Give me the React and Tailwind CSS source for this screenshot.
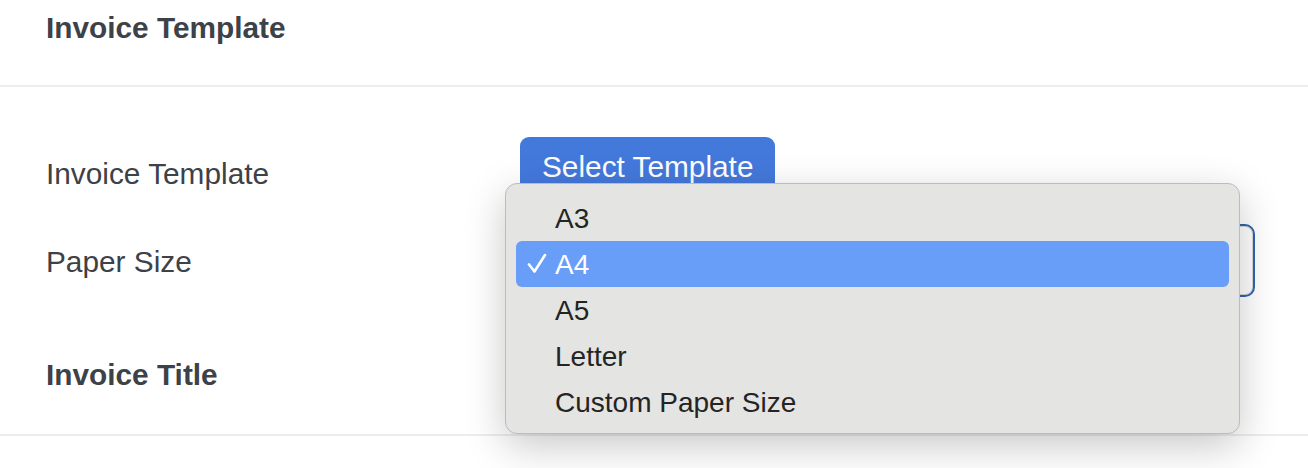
import React from "react";

const items = ["A3", "A4", "A5", "Letter", "Custom Paper Size"];

export default function App() {
  return (
    <div className="relative w-[1308px] h-[468px] bg-white overflow-hidden text-[#3d4148]" style={{ fontFamily: '"Liberation Sans", Arial, sans-serif' }}>
      <div className="h-[87px] border-b-2 border-[#ededed] px-[46px] pt-[10px]">
        <h1 className="text-[29.8px] leading-[36px] font-bold">Invoice Template</h1>
      </div>
      <div className="px-[46px] pt-[50px]">
        <div className="flex items-center h-[70px]">
          <div className="w-[474px] text-[29.8px] leading-[36px] pt-[3px]">Invoice Template</div>
          <button className="self-start h-[58px] px-[22px] pt-[2px] rounded-[9px] bg-[#4479dc] text-white text-[29.8px] leading-[36px]">Select Template</button>
        </div>
        <div className="flex items-center h-[73px] mt-[17px]">
          <div className="w-[474px] text-[29.8px] leading-[36px] pt-[2px]">Paper Size</div>
          <div className="w-[735px] h-[73px] rounded-[10px] border-2 border-[#2f65ae] bg-white shadow-[inset_0_0_0_1px_#d8d8d8]"></div>
        </div>
        <div className="mt-[60px] text-[29.8px] leading-[36px] font-bold">Invoice Title</div>
      </div>
      <div className="mt-[41px] border-b-2 border-[#ededed]"></div>

      <div className="absolute left-[505px] top-[183px] w-[735px] h-[251px] rounded-[12px] bg-[#e4e4e2] border border-[#bcbcbc] shadow-[0_12px_40px_rgba(0,0,0,0.22)] px-[10px] pt-[11px] text-[#242424]">
        {items.map((it) => {
          const sel = it === "A4";
          return (
            <div key={it} className={`relative h-[46px] flex items-center pl-[39px] pt-[1px] rounded-[6px] text-[28px] ${sel ? "bg-[#689ef8] text-white" : ""}`}>
              {sel && (
                <svg className="absolute left-[11px] top-[12px]" width="20" height="21" viewBox="0 0 20 21" fill="none">
                  <path d="M2 11.5 L7.5 18.5 L18 2" stroke="white" strokeWidth="2.6" strokeLinecap="round" strokeLinejoin="round" />
                </svg>
              )}
              {it}
            </div>
          );
        })}
      </div>
    </div>
  );
}
